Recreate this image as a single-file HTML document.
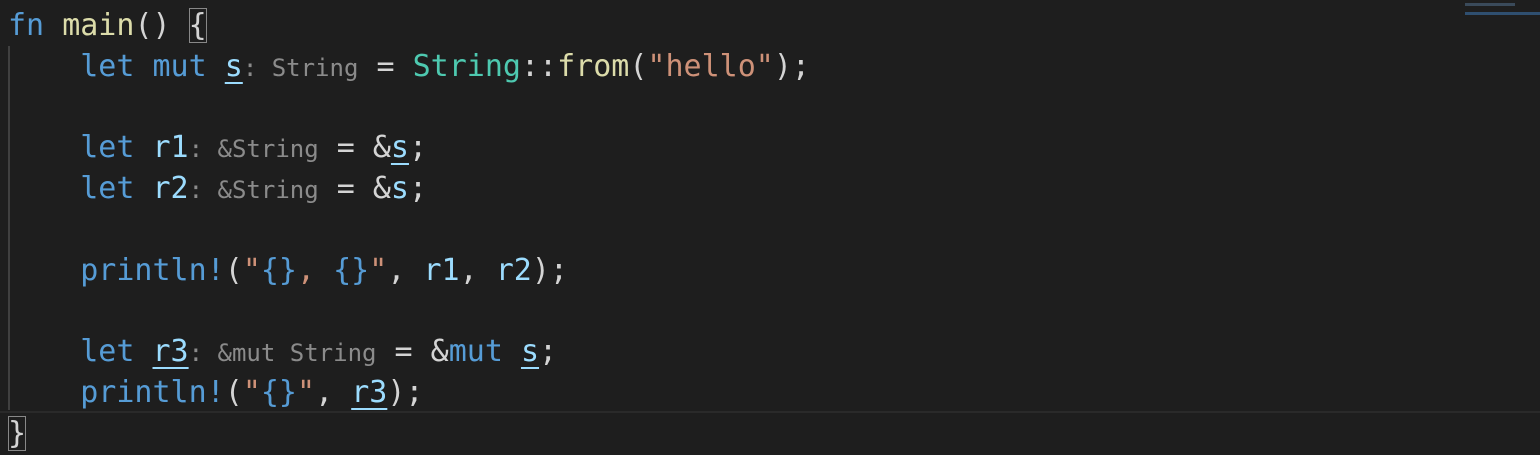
<!DOCTYPE html>
<html><head><meta charset="utf-8"><style>
html,body{margin:0;padding:0;background:#1e1e1e;width:1540px;height:441px;overflow:hidden}
.code{position:absolute;left:8px;top:6px;font-family:"DejaVu Sans Mono","Liberation Mono",monospace;font-size:30px;color:#d4d4d4}
.l{height:40.8px;line-height:40.8px;white-space:pre}
.k{color:#569cd6}.v{color:#9cdcfe}.f{color:#dcdcaa}.t{color:#4ec9b0}.s{color:#ce9178}
.h{color:#8b8b8b;font-size:24px}
.u{text-decoration:underline;text-underline-offset:6px;text-decoration-thickness:2px}
.guide{position:absolute;left:8px;top:46px;width:2px;height:364px;background:#404040}
.cur{position:absolute;left:0;top:411px;width:1540px;height:30px;border-top:2px solid #2a2a2a;box-sizing:border-box}
.bb{outline:1px solid #888;outline-offset:-1px}
</style></head><body>
<div class="cur"></div>
<div class="guide"></div>
<div style="position:absolute;left:1465px;top:3px;width:50px;height:3px;background:#3a4a5a"></div>
<div style="position:absolute;left:1465px;top:12px;width:75px;height:3px;background:#2f4f70"></div>
<div class="code"><div class="l"><span class="k">fn</span> <span class="f">main</span>() <span class="bb">{</span></div><div class="l">    <span class="k">let</span> <span class="k">mut</span> <span class="v u">s</span><span class="h">: String</span> = <span class="t">String</span>::<span class="f">from</span>(<span class="s">"hello"</span>);</div><div class="l"> </div><div class="l">    <span class="k">let</span> <span class="v">r1</span><span class="h">: &amp;String</span> = &amp;<span class="v u">s</span>;</div><div class="l">    <span class="k">let</span> <span class="v">r2</span><span class="h">: &amp;String</span> = &amp;<span class="v">s</span>;</div><div class="l"> </div><div class="l">    <span class="k">println!</span>(<span class="s">"</span><span class="k">{}</span><span class="s">, </span><span class="k">{}</span><span class="s">"</span>, <span class="v">r1</span>, <span class="v">r2</span>);</div><div class="l"> </div><div class="l">    <span class="k">let</span> <span class="v u">r3</span><span class="h">: &amp;mut String</span> = &amp;<span class="k">mut</span> <span class="v u">s</span>;</div><div class="l">    <span class="k">println!</span>(<span class="s">"</span><span class="k">{}</span><span class="s">"</span>, <span class="v u">r3</span>);</div><div class="l"><span class="bb">}</span></div></div>
</body></html>
